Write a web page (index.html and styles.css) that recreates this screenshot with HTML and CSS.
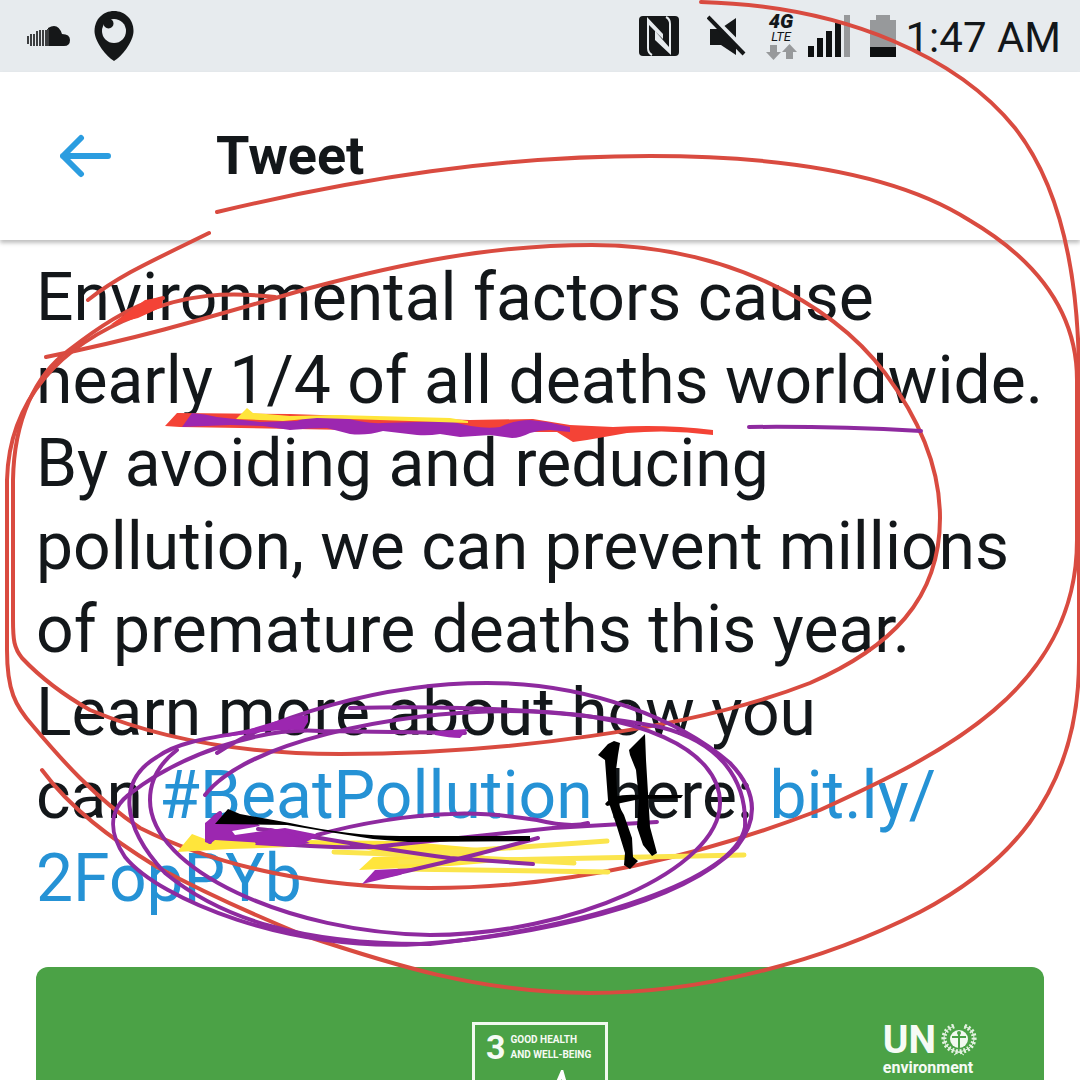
FILE: index.html
```html
<!DOCTYPE html>
<html lang="en">
<head>
<meta charset="utf-8">
<meta name="viewport" content="width=device-width, initial-scale=1">
<title>Tweet</title>
<link rel="stylesheet" href="styles.css">
</head>
<body>
<div class="screen">
  <div class="status">
    <div class="status-group notifications">
      <svg width="44" height="22" viewBox="0 0 44 22" fill="#151718" aria-hidden="true">
        <path d="M22 21V3Q32-3 36 9Q44 9 44 15Q44 21 38 21Z"/>
        <path d="M2 11v8M5 9v12M8 9v12M11 6v15M14 5v16M17 5v16M20 5v16M22 4v17" stroke="#3c3e40" stroke-width="2"/>
      </svg>
      <svg width="40" height="50" viewBox="0 0 40 50" aria-hidden="true">
        <path fill="#151718" d="M20 0C31 0 39.500 8.500 39.500 20C39.500 31 27 46 20 50C13 46 .5 31 .5 20C.5 8.500 9 0 20 0Z"/>
        <circle cx="20" cy="20" r="12" fill="#e7ebee"/>
        <circle cx="14.500" cy="12.500" r="5" fill="#151718"/>
      </svg>
    </div>
    <div class="status-group indicators">
      <svg width="40" height="40" viewBox="0 0 40 40" aria-hidden="true">
        <rect width="40" height="40" rx="4" fill="#151718"/>
        <path d="M9 4V32Q9 37 13 39M31 36V8Q31 3 27 1" fill="none" stroke="#e7ebee" stroke-width="2"/>
        <path d="M8 1L24 18V23L10 9V32H8ZM32 39L16 24V15L30 31V8H32Z" fill="#e7ebee"/>
        <path d="M10 11L14 15V37Q10 35 10 31ZM30 29L26 25V3Q30 5 30 9Z" fill="#151718"/>
      </svg>
      <svg class="mute" width="40" height="42" viewBox="0 0 40 42" aria-hidden="true">
        <path fill="#151718" d="M3 14H13L29 3V40L14 30H3Z"/>
        <path d="M4 1L40 37" stroke="#e7ebee" stroke-width="5"/>
        <path d="M1 2L37 39" stroke="#151718" stroke-width="4"/>
      </svg>
      <div class="network">
        <span class="gen">4G</span>
        <span class="lte">LTE</span>
        <svg width="31" height="16" viewBox="0 0 31 16" fill="#97999b" aria-hidden="true"><path d="M4 1h7v7h4L7.500 16L0 8h4ZM20 15V8h-4L23.500 0L31 8h-4v7Z"/></svg>
      </div>
      <svg class="signal" width="42" height="42" viewBox="0 0 42 42" fill="#0d0f10" aria-hidden="true">
        <path d="M0 31h6v11H0ZM9 23h6v19H9ZM18 16h6v26h-6ZM27 8h6v34h-6Z"/><path fill="#97999b" d="M36 0h6v42h-6Z"/>
      </svg>
      <svg class="battery" width="26" height="42" viewBox="0 0 26 42" aria-hidden="true">
        <path fill="#97999b" d="M6 0h14v5h6v37H0V5h6Z"/><path fill="#0d0f10" d="M0 32h26v10H0Z"/>
      </svg>
      <time>1:47 AM</time>
    </div>
  </div>

  <header class="app-bar">
    <button class="back" aria-label="Back">
      <svg width="52" height="44" viewBox="0 0 52 44" fill="none" stroke="#2b9de0" stroke-width="6" stroke-linecap="round" stroke-linejoin="round" aria-hidden="true"><path d="M48 22H3M21 4L3 22L21 40"/></svg>
    </button>
    <h1>Tweet</h1>
  </header>

  <main class="tweet">
    <p class="tweet-text">Environmental factors cause<br>nearly 1/4 of all deaths worldwide.<br>By avoiding and reducing<br>pollution, we can prevent millions<br>of premature deaths this year.<br>Learn more about how you<br>can <a href="#tag">#BeatPollution</a> here: <a href="#link">bit.ly/<br>2FopPYb</a></p>

    <section class="card">
      <div class="goal">
        <div class="goal-head">
          <span class="goal-number">3</span>
          <span class="goal-name">GOOD HEALTH<br>AND WELL-BEING</span>
        </div>
        <svg class="pulse" width="60" height="40" viewBox="0 0 60 40" fill="none" stroke="#fff" stroke-width="4" aria-hidden="true"><path d="M0 26H20L30 3L40 38"/></svg>
      </div>
      <div class="un">
        <div class="un-mark">
          <span>UN</span>
          <svg width="36" height="32" viewBox="0 0 36 32" fill="none" stroke="#e3f1e1" aria-hidden="true">
            <circle cx="18" cy="15" r="9" fill="#f2f9f0" stroke="none"/>
            <path d="M13 2Q2 6 3 16Q5 26 18 28Q31 26 33 16Q34 6 23 2M13 31L18 28L23 31" stroke-width="1"/>
            <path d="M13 2Q2 6 3 16Q5 26 18 28Q31 26 33 16Q34 6 23 2" stroke-width="5" stroke-dasharray="2 2"/>
            <path d="M18 9V24M11 13H25" stroke="#4ba246" stroke-width="2"/>
            <circle cx="18" cy="9" r="2" fill="#4ba246" stroke="none"/>
          </svg>
        </div>
        <span class="un-sub">environment</span>
      </div>
    </section>
  </main>

  <svg class="ink" viewBox="0 0 1080 1080" aria-hidden="true">
    <!-- red loops -->
    <g class="red">
      <path d="M701 2C850 6 960 60 1015 128C1058 183 1079 270 1079 380L1079 660C1079 800 1000 870 920 912C820 963 700 993 590 993C480 993 390 964 303 935C230 905 190 885 157 867C110 838 70 808 42 770"/>
      <path d="M217 212C360 178 500 156 650 156C790 156 900 176 969 220C1020 250 1077 300 1077 380L1077 540C1077 690 940 755 820 810C690 860 560 888 430 888C320 888 220 868 140 828C95 798 60 758 33 726C15 706 7 690 7 650L7 480C9 400 60 345 138 315C185 293 230 292 275 297"/>
      <path d="M46 357C150 336 220 314 310 288C400 264 490 245 592 245C720 245 830 300 885 373C920 420 940 470 940 518C940 600 890 648 810 683C690 730 500 754 340 754C230 754 150 735 90 710C60 693 40 677 22 658C14 648 13 640 13 620L13 480C14 420 35 375 69 350C95 330 130 305 163 298"/>
      <path d="M88 300C120 275 150 262 209 233"/>
    </g>
    <path class="red-fill" d="M110 325L145 300L163 297L162 307L138 318Z"/>

    <!-- underline strokes -->
    <path class="red-fill" d="M165 426L177 413L290 414L470 420L533 419L570 425L613 427Q665 424 713 430V435Q670 429 627 433L587 440L573 442L557 432L460 432L180 427Z"/>
    <path class="purple-fill" d="M182 427L192 413Q205 414 217 417L260 422L297 421Q310 416 323 417L343 417Q365 424 383 423L450 421Q480 430 500 427Q515 420 530 420L547 422L570 427V432L550 430Q540 430 530 433Q520 438 512 438L490 435L460 437L440 434Q428 436 417 435L383 431Q366 436 350 434L327 428Q310 428 290 430L263 426L230 425Z"/>
    <path class="yellow-fill" d="M236 419L247 408L253 413L290 416L337 415L450 418L468 421V423L380 420L317 418L283 421Z"/>
    <path class="purple" d="M749 427Q830 426 921 431"/>

    <!-- yellow scribble -->
    <path class="yellow-fill" d="M177 852L192 834L205 839L400 841L500 850L470 856L380 853L350 845L230 849Z"/>
    <path class="yellow-fill" d="M359 870L373 857L470 853L510 861L450 866Z"/>
    <g class="yellow">
      <path d="M334 852L420 855L574 863"/><path d="M420 854L607 841"/><path d="M400 862L744 855"/><path d="M400 869L608 872"/>
    </g>

    <!-- purple loops -->
    <g class="purple">
      <path d="M217 753C270 718 380 683 487 683C590 683 680 720 730 763C758 792 758 820 737 847C680 905 540 935 420 944C290 952 160 900 125 857C107 830 110 808 131 793C180 755 260 727 320 731L465 733"/>
      <path d="M205 795C245 743 390 712 510 711C640 711 720 750 720 803C720 870 570 935 430 935C290 933 150 870 150 800C150 780 160 763 177 750"/>
      <path d="M350 708C470 705 570 710 660 727C720 742 747 780 745 827C735 880 590 927 430 944C300 945 220 918 165 873C120 825 118 780 157 757C190 733 250 737 306 718"/>
      <path d="M258 829C300 833 350 845 450 858L533 864M257 842C300 846 340 848 373 847L487 835L553 828L657 822M317 835C360 823 410 815 450 814Q485 812 537 820Q570 828 588 823M375 878Q455 861 538 838M210 842Q203 823 220 813"/>
    </g>
    <path class="purple-fill" d="M200 740L240 732L290 717L308 715V722L303 730Q280 729 240 735Z"/>
    <path class="purple-fill" d="M435 731L468 729L460 738Q450 738 435 735Z"/>
    <path class="purple-fill" d="M220 811L205 823V842L210 844L215 840L300 845L320 835L285 828L235 835L232 831L260 826L257 823L225 822Z"/>
    <path class="purple-fill" d="M255 845L270 828L283 831L310 843L290 847Z"/>
    <path class="purple-fill" d="M362 884L375 870L415 868L400 875Z"/>

    <!-- black marks -->
    <path class="black" d="M215 824L228 809L240 814L290 823Q350 836 400 836L530 836V841L408 842L373 839L323 831L287 825Z"/>
    <path class="black" d="M598 755L608 744L614 741L620 743L618 755L616 770L617 793Q618 806 624 815L632 838L633 857L638 861L630 869L624 865L625 853L617 827L608 800L605 760Z"/>
    <path class="black" d="M629 750L645 734L646 760L648 793L650 827L657 853L652 856L643 845L637 827L639 800L636 770L630 755Z"/>
    <path class="black" d="M605 804Q612 793 640 795L683 795L681 798L640 799L607 806Z"/>
  </svg>
</div>
</body>
</html>
```
FILE: styles.css
```css
* { box-sizing: border-box; }

body {
  margin: 0;
  background: #fff;
  color: #13171a;
  font-family: Roboto, "Liberation Sans", sans-serif;
}

.screen {
  position: relative;
  height: 100vh;
  overflow: hidden;
}

.status {
  display: flex;
  align-items: center;
  justify-content: space-between;
  height: 72px;
  padding: 0 19px 0 26px;
  background: #e7ebee;
}

.status-group { display: flex; align-items: center; }
.notifications { gap: 24px; }
.mute { margin-left: 28px; }

.network {
  display: flex;
  flex-direction: column;
  align-items: center;
  margin-left: 19px;
  font-style: italic;
}
.gen { font-size: 20px; line-height: 18px; font-weight: 900; }
.lte { font-size: 13px; line-height: 14px; }

.signal { margin-left: 11px; }
.battery { margin: 0 10px 0 20px; }

time { padding-top: 3px; font-size: 42px; line-height: 48px; }

.app-bar {
  display: flex;
  align-items: center;
  gap: 104px;
  height: 168px;
  padding: 0 60px;
  background: #fff;
  box-shadow: 0 3px 4px rgba(0, 0, 0, .25);
}

.back {
  display: flex;
  padding: 0;
  border: 0;
  background: none;
}

h1 { margin: 0; font-size: 54px; line-height: 64px; font-weight: 700; }

.tweet { padding: 16px 36px 0; }

.tweet-text {
  margin: 0 0 47px;
  font-size: 66px;
  line-height: 83px;
  white-space: nowrap;
}
.tweet-text a { color: #2592d5; text-decoration: none; }

.card {
  display: grid;
  grid-template-columns: 1fr 136px 1fr;
  min-height: 240px;
  padding-top: 55px;
  border-radius: 12px;
  background: #4ba246;
  color: #f6fbf5;
}

.goal {
  grid-column: 2;
  border: 3px solid #f2f9f0;
  padding: 6px 0 0 11px;
}
.goal-head { display: flex; align-items: center; gap: 5px; }
.goal-number { font-size: 34px; line-height: 32px; font-weight: 700; }
.goal-name {
  font-size: 10px;
  line-height: 15px;
  font-weight: 700;
  white-space: nowrap;
}
.pulse { display: block; margin: 7px 0 0 46px; }

.un {
  display: flex;
  flex-direction: column;
  justify-self: end;
  align-self: start;
  margin-right: 67px;
}
.un-mark { display: flex; align-items: center; gap: 5px; font-size: 39px; line-height: 36px; font-weight: 700; }
.un-sub { font-size: 16px; line-height: 20px; font-weight: 700; }

.ink {
  position: absolute;
  top: 0;
  left: 0;
  width: 100%;
  pointer-events: none;
}
.red, .purple, .yellow { fill: none; stroke-width: 4; stroke-linecap: round; stroke-linejoin: round; }
.red { stroke: #d94b40; }
.purple { stroke: #8e2a9f; }
.yellow { stroke: #fbe54d; stroke-width: 5; }
.red-fill { fill: #f44336; }
.purple-fill { fill: #9c27b0; }
.yellow-fill { fill: #ffe53b; }
.black { fill: #000; }
```
